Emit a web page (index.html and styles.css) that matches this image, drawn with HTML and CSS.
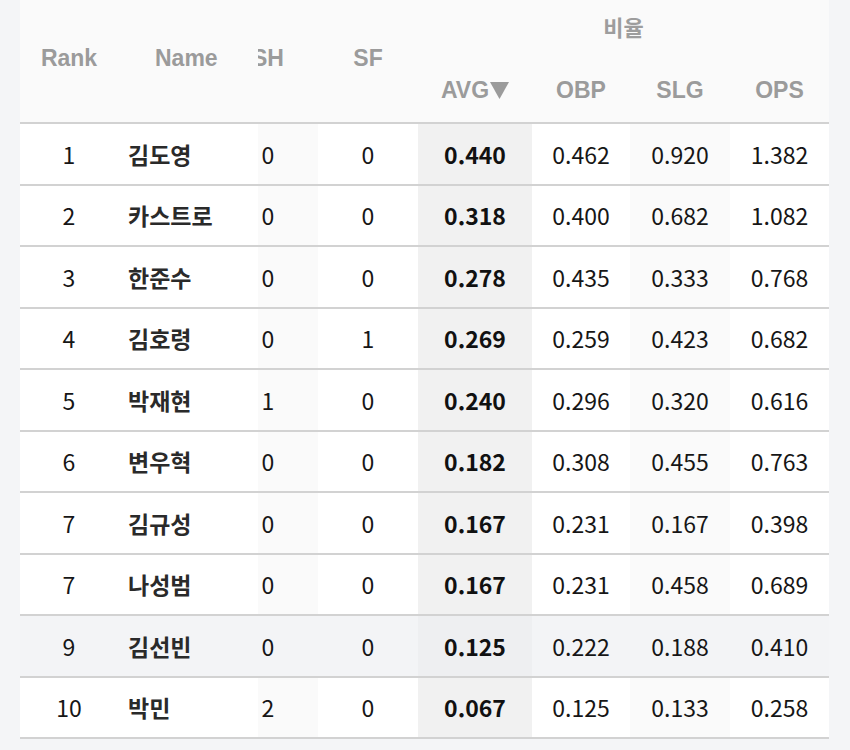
FILE: index.html
```html
<!DOCTYPE html>
<html lang="ko">
<head>
<meta charset="utf-8">
<title>타자 기록</title>
<link rel="stylesheet" href="styles.css">
</head>
<body>
<div class="wrap">
<table class="stats">
  <colgroup>
    <col class="c-rank"><col class="c-name"><col class="c-sh"><col class="c-sf">
    <col class="c-avg"><col class="c-obp"><col class="c-slg"><col class="c-ops">
  </colgroup>
  <thead>
    <tr class="h1">
      <th rowspan="2" class="span">Rank</th>
      <th rowspan="2" class="span name edge">Name</th>
      <th rowspan="2" class="span clip"><div class="clipbox"><span>SH</span></div></th>
      <th rowspan="2" class="span">SF</th>
      <th colspan="4" class="group">비율</th>
    </tr>
    <tr class="h2">
      <th class="sorted">AVG<svg class="arrow" width="19" height="17" viewBox="0 0 19 17" aria-hidden="true"><polygon points="0,0 19,0 9.5,17" fill="#9b9b9b"/></svg></th>
      <th>OBP</th>
      <th>SLG</th>
      <th>OPS</th>
    </tr>
  </thead>
  <tbody>
    <tr><td>1</td><td class="name edge">김도영</td><td class="clip stripe"><div class="clipbox"><span>0</span></div></td><td>0</td><td class="avg">0.440</td><td>0.462</td><td class="stripe">0.920</td><td>1.382</td></tr>
    <tr><td>2</td><td class="name edge">카스트로</td><td class="clip stripe"><div class="clipbox"><span>0</span></div></td><td>0</td><td class="avg">0.318</td><td>0.400</td><td class="stripe">0.682</td><td>1.082</td></tr>
    <tr><td>3</td><td class="name edge">한준수</td><td class="clip stripe"><div class="clipbox"><span>0</span></div></td><td>0</td><td class="avg">0.278</td><td>0.435</td><td class="stripe">0.333</td><td>0.768</td></tr>
    <tr><td>4</td><td class="name edge">김호령</td><td class="clip stripe"><div class="clipbox"><span>0</span></div></td><td>1</td><td class="avg">0.269</td><td>0.259</td><td class="stripe">0.423</td><td>0.682</td></tr>
    <tr><td>5</td><td class="name edge">박재현</td><td class="clip stripe"><div class="clipbox"><span>1</span></div></td><td>0</td><td class="avg">0.240</td><td>0.296</td><td class="stripe">0.320</td><td>0.616</td></tr>
    <tr><td>6</td><td class="name edge">변우혁</td><td class="clip stripe"><div class="clipbox"><span>0</span></div></td><td>0</td><td class="avg">0.182</td><td>0.308</td><td class="stripe">0.455</td><td>0.763</td></tr>
    <tr><td>7</td><td class="name edge">김규성</td><td class="clip stripe"><div class="clipbox"><span>0</span></div></td><td>0</td><td class="avg">0.167</td><td>0.231</td><td class="stripe">0.167</td><td>0.398</td></tr>
    <tr><td>7</td><td class="name edge">나성범</td><td class="clip stripe"><div class="clipbox"><span>0</span></div></td><td>0</td><td class="avg">0.167</td><td>0.231</td><td class="stripe">0.458</td><td>0.689</td></tr>
    <tr class="hl"><td>9</td><td class="name edge">김선빈</td><td class="clip stripe"><div class="clipbox"><span>0</span></div></td><td>0</td><td class="avg">0.125</td><td>0.222</td><td class="stripe">0.188</td><td>0.410</td></tr>
    <tr><td>10</td><td class="name edge">박민</td><td class="clip stripe"><div class="clipbox"><span>2</span></div></td><td>0</td><td class="avg">0.067</td><td>0.125</td><td class="stripe">0.133</td><td>0.258</td></tr>
  </tbody>
</table>
</div>
</body>
</html>
```

FILE: styles.css
```css
html, body {
  margin: 0;
  padding: 0;
  background: #f4f5f7;
}

.wrap {
  padding-left: 20px;
  width: 809px;
}

.stats {
  border-collapse: separate;
  border-spacing: 0;
  table-layout: fixed;
  width: 809px;
  font-family: "Noto Sans CJK KR", "Noto Sans", sans-serif;
  color: #161616;
  background: #ffffff;
}

.c-rank { width: 98px; }
.c-name { width: 140px; }
.c-sh { width: 60px; }
.c-sf { width: 100px; }
.c-avg { width: 114px; }
.c-obp { width: 98px; }
.c-slg { width: 100px; }
.c-ops { width: 99px; }

thead th {
  background: #fafafa;
  color: #9b9b9b;
  font-family: "Liberation Sans", Arial, sans-serif;
  font-weight: 700;
  font-size: 23px;
  text-align: center;
  vertical-align: middle;
  padding: 0;
}

thead th.span {
  border-bottom: 2px solid #d2d2d2;
  padding-bottom: 6px;
}

thead th.group {
  font-family: "Noto Sans CJK KR", sans-serif;
  font-size: 22px;
  color: #9d9d9d;
  height: 51px;
  padding-bottom: 5px;
}

thead tr.h2 th {
  height: 63px;
  padding-top: 3px;
  border-bottom: 2px solid #d2d2d2;
}

.arrow {
  display: inline-block;
  vertical-align: -1px;
  margin-left: 1px;
}

thead th.name {
  text-align: left;
  padding-left: 37px;
}

tbody td {
  height: 59.5px;
  padding: 0;
  border-bottom: 2px solid #d2d2d2;
  text-align: center;
  font-size: 23px;
  background: #ffffff;
}

tbody td.name {
  text-align: left;
  padding-left: 10px;
  font-weight: 700;
  color: #2a2a2a;
}

tbody td.stripe { background: #fafafa; }
tbody td.avg {
  background: #f1f1f1;
  font-weight: 700;
  color: #111111;
}

tbody tr.hl td { background: #f3f4f6; }
tbody tr.hl td.avg { background: #eeeff1; }

.edge {
  box-shadow: 8px 0 8px -8px rgba(0, 0, 0, 0.10);
}

.clipbox {
  width: 60px;
  overflow: hidden;
  white-space: nowrap;
}

.clipbox span {
  display: block;
  width: 100px;
  margin-left: -40px;
  text-align: center;
}
```
